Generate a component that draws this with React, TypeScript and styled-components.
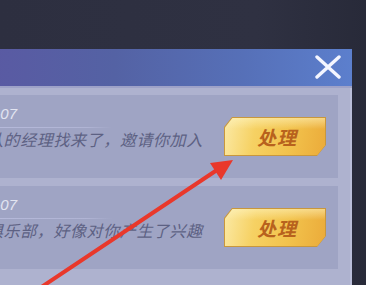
import styled, { createGlobalStyle } from 'styled-components'

const GlobalStyle = createGlobalStyle`
  html, body { margin: 0; padding: 0; background: #2c2e3e; }
  body { font-family: "Noto Sans", "Noto Sans CJK SC", sans-serif; }
`

const messages = [
  { time: '6-07', text: '队的经理找来了，邀请你加入' },
  { time: '6-07', text: '俱乐部，好像对你产生了兴趣' },
]

const App = () => {
  return (
    <Page>
      <GlobalStyle />
      <Panel>
        <Header>
          <Close aria-label="close">
            <svg width="28" height="24" viewBox="0 0 28 24">
              <path d="M3 2 L25 22 M25 2 L3 22" stroke="#f4f6ff" strokeWidth="3.4" strokeLinecap="round" fill="none" />
            </svg>
          </Close>
        </Header>
        <Body>
          {messages.map((m, i) => (
            <Card key={i}>
              <TextCol>
                <Time>{m.time}</Time>
                <Divider />
                <Message>{m.text}</Message>
              </TextCol>
              <ButtonFrame>
                <ActionButton>处理</ActionButton>
              </ButtonFrame>
            </Card>
          ))}
        </Body>
      </Panel>
      <Arrow width="366" height="285" viewBox="0 0 366 285">
        <line x1="28" y1="296" x2="220" y2="168" stroke="#e9382b" strokeWidth="4" strokeLinecap="round" />
        <polygon points="233,160 210,163 221,180" fill="#e9382b" />
      </Arrow>
    </Page>
  )
}

export default App

const Page = styled.div`
  position: relative;
  width: 366px;
  height: 285px;
  overflow: hidden;
  background: linear-gradient(90deg, #2d2f40 0%, #2f3142 70%, #282a39 100%);
  padding-top: 49px;
  box-sizing: border-box;
`

const Panel = styled.div`
  margin-left: -80px;
  width: 432px;
  height: 260px;
  background: #aeb2cf;
  box-shadow: inset -2px 0 0 #b9bdd8;
  display: flex;
  flex-direction: column;
`

const Header = styled.div`
  height: 37px;
  flex-shrink: 0;
  background: linear-gradient(90deg, #5d55a2 0%, #5462a4 45%, #5670b8 75%, #5c7fcd 100%);
  border-bottom: 2px solid #9ea2c8;
  display: flex;
  align-items: center;
  justify-content: flex-end;
  padding-right: 10px;
`

const Close = styled.div`
  width: 28px;
  height: 24px;
  display: flex;
  margin-top: -2px;
`

const Body = styled.div`
  padding: 7px 14px 0 10px;
  display: flex;
  flex-direction: column;
  gap: 8px;
`

const Card = styled.div`
  height: 83px;
  background: #9fa4c4;
  display: flex;
  align-items: center;
  padding: 0 12px 0 57px;
  box-sizing: border-box;
`

const TextCol = styled.div`
  flex: 1;
  display: flex;
  flex-direction: column;
  align-self: flex-start;
  padding-top: 9px;
`

const Time = styled.div`
  font-family: "Liberation Sans", "Noto Sans", sans-serif;
  font-style: italic;
  font-size: 15px;
  line-height: 20px;
  color: #e2e4f1;
`

const Divider = styled.div`
  margin-top: 3px;
  width: 125px;
  height: 1px;
  background: linear-gradient(90deg, #b6badb 0%, #b0b4d4 80%, rgba(176, 180, 212, 0) 100%);
`

const Message = styled.div`
  font-family: "Noto Sans CJK SC", sans-serif;
  font-style: italic;
  font-size: 16px;
  line-height: 22px;
  letter-spacing: 0.6px;
  white-space: nowrap;
  color: #5d6183;
`

const ButtonFrame = styled.div`
  width: 102px;
  height: 39px;
  padding: 1px;
  box-sizing: border-box;
  background: #c8973e;
  clip-path: polygon(8px 0, 100% 0, 100% 28px, 93px 100%, 0 100%, 0 10px);
`

const ActionButton = styled.div`
  width: 100%;
  height: 100%;
  display: flex;
  align-items: center;
  justify-content: center;
  background:
    linear-gradient(180deg, rgba(255, 246, 196, 0.55) 0%, rgba(255, 246, 196, 0) 30%),
    linear-gradient(100deg, #fbe9a4 0%, #f6d163 30%, #f2c24c 65%, #ebab3a 100%);
  clip-path: polygon(7.5px 0, 100% 0, 100% 27.5px, 92.5px 100%, 0 100%, 0 9.5px);
  font-family: "Noto Sans CJK SC", sans-serif;
  font-style: italic;
  font-weight: 700;
  font-size: 19px;
  letter-spacing: 1px;
  color: #b8621d;
  padding-left: 4px;
  box-sizing: border-box;
`

const Arrow = styled.svg`
  position: absolute;
  left: 0;
  top: 0;
  pointer-events: none;
`
